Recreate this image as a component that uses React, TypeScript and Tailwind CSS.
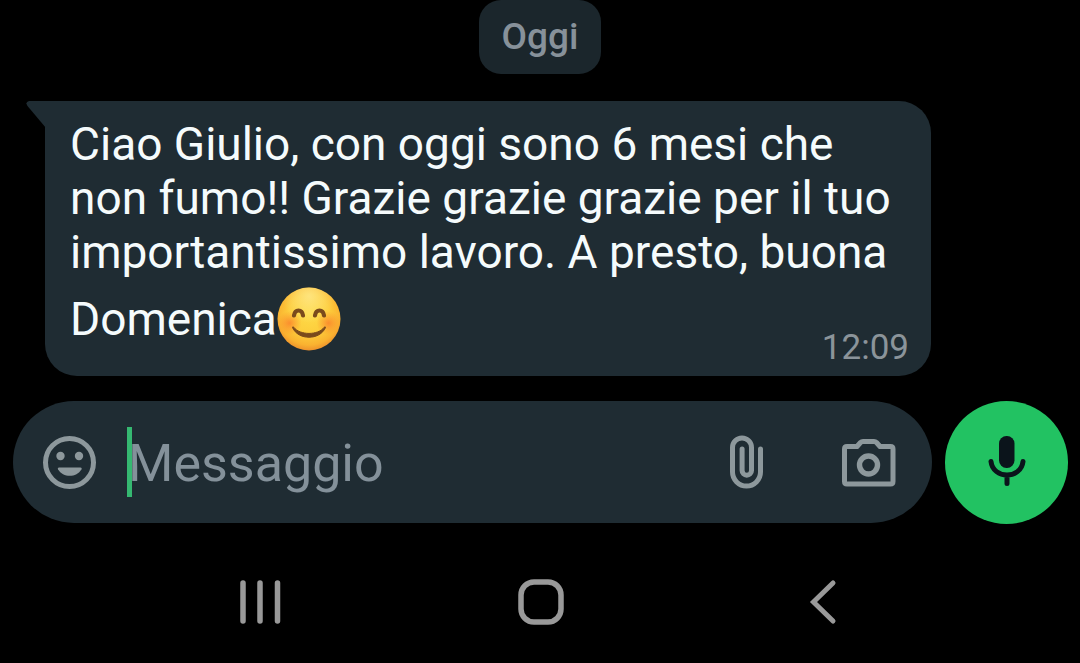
import React from 'react';

function BlushEmoji() {
  return (
    <svg
      role="img"
      aria-label="😊"
      viewBox="0 0 64 64"
      className="mt-2 inline-block size-16 align-[-16px]"
    >
      <defs>
        <radialGradient id="face" cx="0.5" cy="0.42" r="0.58">
          <stop offset="0" stopColor="#fedb48" />
          <stop offset="0.55" stopColor="#fdcd3c" />
          <stop offset="0.85" stopColor="#fab230" />
          <stop offset="1" stopColor="#ee922c" />
        </radialGradient>
        <radialGradient id="shine" cx="0.5" cy="0.14" r="0.42">
          <stop offset="0" stopColor="#ffeb92" stopOpacity="0.75" />
          <stop offset="1" stopColor="#ffeb92" stopOpacity="0" />
        </radialGradient>
        <radialGradient id="cheek">
          <stop offset="0" stopColor="#fb7a2a" stopOpacity="0.75" />
          <stop offset="1" stopColor="#fb8a2a" stopOpacity="0" />
        </radialGradient>
      </defs>
      <circle cx="32" cy="32" r="31.5" fill="url(#face)" />
      <circle cx="32" cy="32" r="31.5" fill="url(#shine)" />
      <circle cx="12.5" cy="36" r="12" fill="url(#cheek)" />
      <circle cx="51.5" cy="36" r="12" fill="url(#cheek)" />
      <g fill="none" stroke="#7a4a1c" strokeLinecap="round" strokeWidth="4.2">
        <path d="M17 28.500C18 21.800 25 21.800 26 28.500" />
        <path d="M38 28.500C39 21.800 46 21.800 47 28.500" />
      </g>
      <path
        d="M15.500 40.500C21 53.500 43 53.500 48.500 40.500C48.800 39.800 47.800 39.600 47.300 40.200C41 48.500 23 48.500 16.700 40.200C16.200 39.600 15.200 39.800 15.500 40.500Z"
        fill="#7a4a1c"
        stroke="#7a4a1c"
        strokeWidth="1"
      />
    </svg>
  );
}

function SmileyIcon() {
  return (
    <svg viewBox="0 0 54 54" className="size-[54px]" aria-hidden="true">
      <circle cx="26.500" cy="27.500" r="24" fill="none" stroke="currentColor" strokeWidth="5" />
      <circle cx="17.500" cy="21" r="4.200" fill="currentColor" />
      <circle cx="36" cy="21" r="4.200" fill="currentColor" />
      <path d="M16 32.500H37.500C38.500 32.500 39 33.300 38.500 34.200C33.500 43 20 43 15 34.200C14.500 33.300 15 32.500 16 32.500Z" fill="currentColor" />
    </svg>
  );
}

function ClipIcon() {
  return (
    <svg viewBox="0 0 34 54" className="h-[54px] w-[34px]" aria-hidden="true">
      <path
        d="M30.500 14V37A14 14 0 0 1 2.500 37V12.500A9.500 9.500 0 0 1 21.500 12.500V35.500A4.700 4.700 0 0 1 12.100 35.500V14"
        fill="none"
        stroke="currentColor"
        strokeWidth="5"
        strokeLinecap="round"
      />
    </svg>
  );
}

function CameraIcon() {
  return (
    <svg viewBox="0 0 54 50" className="h-[50px] w-[54px]" aria-hidden="true">
      <path
        d="M5 9.500H15L18.500 5.500Q19.500 4.500 21 4.500H32Q33.500 4.500 34.500 5.500L38 9.500H48.500Q51 9.500 51 12V44.500Q51 47 48.500 47H5Q2.500 47 2.500 44.500V12Q2.500 9.500 5 9.500Z"
        fill="none"
        stroke="currentColor"
        strokeWidth="5"
        strokeLinejoin="round"
      />
      <circle cx="26.500" cy="28" r="9" fill="none" stroke="currentColor" strokeWidth="5.400" />
    </svg>
  );
}

function MicIcon() {
  return (
    <svg viewBox="0 0 38 52" className="h-[52px] w-[38px]" aria-hidden="true">
      <rect x="11" y="1" width="15.500" height="32" rx="7.500" fill="currentColor" />
      <path
        d="M3 26.500C5 44.500 33 44.500 35 26.500M19 40V48.500"
        fill="none"
        stroke="currentColor"
        strokeWidth="5"
        strokeLinecap="round"
      />
    </svg>
  );
}

function Message() {
  return (
    <article className="relative mx-[45px] mt-[27px] max-w-[886px] rounded-[32px] rounded-tl-none bg-[#1f2c33] pt-4 pr-[22px] pb-[25px] pl-[25px]">
      <svg viewBox="0 0 20 28" className="absolute top-0 -left-[19px] h-7 w-5" aria-hidden="true">
        <path d="M20 0H3Q-1 1 1.500 5L20 27Z" fill="#1f2c33" />
      </svg>
      <p className="text-[46px] leading-[54px] text-[#f5fbfc]">
        Ciao Giulio, con oggi sono 6 mesi che non fumo!! Grazie grazie grazie per il tuo
        importantissimo lavoro. A presto, buona Domenica
        <BlushEmoji />
        <time className="float-right mt-12 text-[35px] leading-[42px] text-[#8b949a]">
          12:09
        </time>
      </p>
    </article>
  );
}

function Composer() {
  return (
    <form
      className="mt-[25px] flex items-start gap-[13px] pr-3 pl-[13px]"
      onSubmit={(event) => event.preventDefault()}
    >
      <div className="flex h-[122px] min-w-0 flex-1 items-center rounded-full bg-[#1f2c33] pr-9 pl-[30px] text-[#8d989c]">
        <button type="button" aria-label="Emoji">
          <SmileyIcon />
        </button>
        <span className="ml-[30px] h-[70px] w-[5px] shrink-0 bg-[#35b871]" aria-hidden="true" />
        <input
          type="text"
          aria-label="Messaggio"
          placeholder="Messaggio"
          className="-ml-1 min-w-0 flex-1 bg-transparent pt-1 text-[52px] leading-[64px] text-[#f5fbfc] outline-none placeholder:text-[#84919a]"
        />
        <button type="button" aria-label="Allega">
          <ClipIcon />
        </button>
        <button type="button" aria-label="Fotocamera" className="ml-[78px]">
          <CameraIcon />
        </button>
      </div>
      <button
        type="button"
        aria-label="Messaggio vocale"
        className="flex size-[123px] shrink-0 items-center justify-center rounded-full bg-[#22c262] pb-1 text-[#0b141b]"
      >
        <MicIcon />
      </button>
    </form>
  );
}

function NavigationBar() {
  return (
    <nav className="mt-12 grid grid-cols-3 place-items-center pr-[116px] pl-[119px] pb-9 text-[#999999]">
      <button type="button" aria-label="Recenti">
        <svg viewBox="0 0 46 60" className="h-[60px] w-[46px]" aria-hidden="true">
          <path d="M6 11V49M23 11V49M40.500 11V49" fill="none" stroke="currentColor" strokeWidth="5.500" strokeLinecap="round" />
        </svg>
      </button>
      <button type="button" aria-label="Home">
        <svg viewBox="0 0 50 60" className="h-[60px] w-[50px]" aria-hidden="true">
          <rect x="5" y="10" width="40" height="40" rx="13" fill="none" stroke="currentColor" strokeWidth="5.500" />
        </svg>
      </button>
      <button type="button" aria-label="Indietro">
        <svg viewBox="0 0 32 60" className="h-[60px] w-8" aria-hidden="true">
          <path d="M26 11L6.500 30L26 49" fill="none" stroke="currentColor" strokeWidth="5" strokeLinecap="round" />
        </svg>
      </button>
    </nav>
  );
}

export default function App() {
  return (
    <main className="min-h-screen bg-black font-['Roboto',sans-serif]">
      <div className="flex justify-center">
        <span className="rounded-[22px] bg-[#1b262c] px-[23px] py-[17px] text-[37px] leading-10 font-medium text-[#87919a]">
          Oggi
        </span>
      </div>
      <Message />
      <Composer />
      <NavigationBar />
    </main>
  );
}
